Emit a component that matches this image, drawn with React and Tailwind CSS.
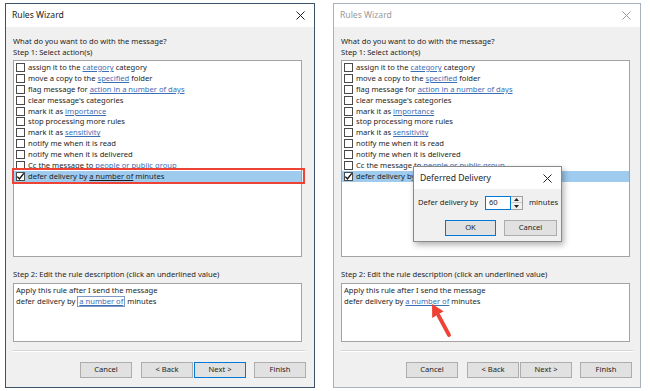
import React from 'react';

function Check({ checked }) {
  return (
    <span className="relative ml-[2px] mr-[3px] inline-block h-[9px] w-[9px] shrink-0 border border-[#4a4a4a] bg-white">
      {checked && (
        <svg className="absolute left-[-1px] top-[-1px]" width="9" height="9" viewBox="0 0 9 9">
          <path d="M1.3 4.6 L3.4 7 L7.8 1.4" fill="none" stroke="#111" strokeWidth="1.4" />
        </svg>
      )}
    </span>
  );
}

function L({ children }) {
  return <span className="text-[#3a6eb5] underline decoration-[0.8px] underline-offset-[1px]">{children}</span>;
}

function Row({ children, checked, selected }) {
  return (
    <div className={selected ? 'flex h-[10.9px] items-center bg-[#9fcbef]' : 'flex h-[10.9px] items-center'}>
      <Check checked={checked} />
      <span className="whitespace-nowrap leading-[10.9px]">{children}</span>
    </div>
  );
}

function XIcon({ color }) {
  return (
    <svg width="9" height="9" viewBox="0 0 9 9">
      <path d="M0.5 0.5 L8.5 8.5 M8.5 0.5 L0.5 8.5" stroke={color} strokeWidth="1" fill="none" />
    </svg>
  );
}

function Btn({ children, cls }) {
  return <div className={cls}>{children}</div>;
}

function Window({ active }) {
  return (
    <div
      className={
        active
          ? 'relative flex h-[385px] w-[310px] shrink-0 flex-col border border-[#3c5268]'
          : 'relative flex h-[385px] w-[308px] shrink-0 flex-col border border-[#a9b3be]'
      }
    >
      <div className="flex h-[23px] items-center justify-between bg-white pl-[6px] pr-[9px]">
        <span className={active ? 'text-[8.6px] text-[#1b1b1b]' : 'text-[8.6px] text-[#9a9a9a]'}>Rules Wizard</span>
        <XIcon color={active ? '#222' : '#999'} />
      </div>
      <div className="flex flex-1 flex-col bg-[#f0f0f0] pl-[7px] pr-[8px] pt-[9px] text-[7.6px] text-[#1e1e1e]">
        <div className="h-[11px] leading-[11px]">What do you want to do with the message?</div>
        <div className="h-[11px] leading-[11px]">Step 1: Select action(s)</div>
        <div className="mt-[2px] h-[197px] w-[289px] border border-[#a3a3a3] bg-white pt-[1px]">
          <Row>assign it to the <L>category</L> category</Row>
          <Row>move a copy to the <L>specified</L> folder</Row>
          <Row>flag message for <L>action in a number of days</L></Row>
          <Row>clear message's categories</Row>
          <Row>mark it as <L>importance</L></Row>
          <Row>stop processing more rules</Row>
          <Row>mark it as <L>sensitivity</L></Row>
          <Row>notify me when it is read</Row>
          <Row>notify me when it is delivered</Row>
          <Row>Cc the message to <L>people or public group</L></Row>
          <Row checked selected>
            defer delivery by <span className="underline decoration-[0.8px] underline-offset-[1px]">a number of</span> minutes
          </Row>
        </div>
        <div className="mt-[12px] h-[11px] leading-[11px]">Step 2: Edit the rule description (click an underlined value)</div>
        <div className="mt-[3px] h-[59px] w-[289px] border border-[#a3a3a3] bg-white px-[2px] pt-[0.5px]">
          <div className="h-[11px] leading-[11px]">Apply this rule after I send the message</div>
          <div className="flex h-[11px] items-center leading-[11px]">
            <span className="whitespace-pre">defer delivery by </span>
            {active ? (
              <span className="border border-[#7d99c4] px-[1px] leading-[9px]">
                <L>a number of</L>
              </span>
            ) : (
              <L>a number of</L>
            )}
            <span className="whitespace-pre"> minutes</span>
          </div>
        </div>
        <div className="mt-[8px] h-[2px] w-[292px] border-b border-t border-b-white border-t-[#d4d4d4]" />
        <div className="mt-[10px] flex justify-end">
          <Btn cls="flex h-[16px] w-[52px] items-center justify-center border border-[#adadad] bg-[#e1e1e1]">Cancel</Btn>
          <Btn cls="ml-[9px] flex h-[16px] w-[52px] items-center justify-center border border-[#adadad] bg-[#e1e1e1]">&lt; Back</Btn>
          <Btn
            cls={
              active
                ? 'ml-[1px] flex h-[16px] w-[52px] items-center justify-center border border-[#0078d7] bg-[#e1e1e1]'
                : 'ml-[1px] flex h-[16px] w-[52px] items-center justify-center border border-[#adadad] bg-[#e1e1e1]'
            }
          >
            Next &gt;
          </Btn>
          <Btn cls="ml-[8px] flex h-[16px] w-[52px] items-center justify-center border border-[#adadad] bg-[#e1e1e1]">Finish</Btn>
        </div>
      </div>

      {active && (
        <div className="pointer-events-none absolute left-[6px] top-[164px] h-[16px] w-[293px] border-2 border-[#ee4234]" />
      )}

      {!active && (
        <>
          <div className="absolute left-[79px] top-[162px] flex h-[76px] w-[149px] flex-col border border-[#8a8a8a] bg-[#f0f0f0] text-[#1e1e1e] shadow-[2px_3px_6px_rgba(0,0,0,0.3)]">
            <div className="flex h-[22px] shrink-0 items-center justify-between bg-white pl-[6px] pr-[9px]">
              <span className="text-[8.6px]">Deferred Delivery</span>
              <XIcon color="#222" />
            </div>
            <div className="mt-[7px] flex h-[14px] items-center pl-[4px] text-[7.6px]">
              <span className="w-[67px] whitespace-nowrap">Defer delivery by</span>
              <div className="flex h-[14px] w-[26px] items-center border border-[#0078d7] bg-white pl-[3px]">60</div>
              <div className="flex h-[14px] w-[12px] flex-col border border-l-0 border-[#a0a0a0] bg-[#f0f0f0]">
                <div className="flex h-[6px] items-center justify-center border-b border-[#c8c8c8]">
                  <svg width="5" height="3" viewBox="0 0 5 3"><path d="M0 3 L2.5 0 L5 3 Z" fill="#222" /></svg>
                </div>
                <div className="flex flex-1 items-center justify-center">
                  <svg width="5" height="3" viewBox="0 0 5 3"><path d="M0 0 L2.5 3 L5 0 Z" fill="#222" /></svg>
                </div>
              </div>
              <span className="ml-[6px]">minutes</span>
            </div>
            <div className="mt-[10px] flex pl-[31px] text-[7.6px]">
              <div className="flex h-[16px] w-[51px] items-center justify-center border border-[#0078d7] bg-[#e1e1e1]">OK</div>
              <div className="ml-[8px] flex h-[16px] w-[53px] items-center justify-center border border-[#adadad] bg-[#e1e1e1]">Cancel</div>
            </div>
          </div>
          <svg className="pointer-events-none absolute left-[89px] top-[295px]" width="32" height="42" viewBox="0 0 32 42">
            <path d="M26 36 L15.5 16.5" stroke="#ee4234" strokeWidth="3.8" strokeLinecap="round" fill="none" />
            <path d="M9 5 L20.6 12.2 L9.2 18.9 Z" fill="#ee4234" />
          </svg>
        </>
      )}
    </div>
  );
}

export default function App() {
  return (
    <div className="flex h-[391px] w-[650px] items-start gap-[18px] overflow-hidden bg-white pl-[5px] pt-[3px] font-['Noto_Sans',sans-serif]">
      <Window active />
      <Window active={false} />
    </div>
  );
}
